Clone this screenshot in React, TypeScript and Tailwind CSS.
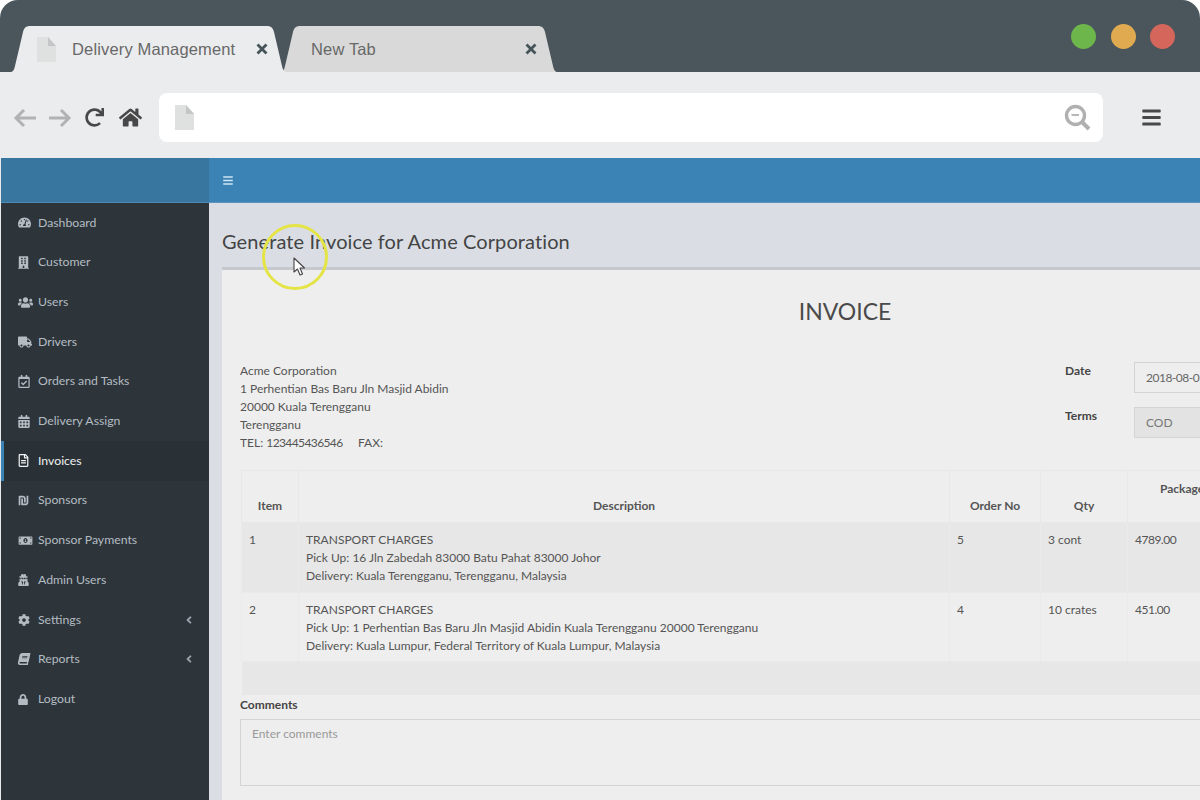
import React from "react";
import {
  FaTachometerAlt, FaBuilding, FaUsers, FaTruck, FaRegCalendarCheck, FaCalendarAlt, FaRegFileAlt,
  FaShekelSign, FaMoneyBillAlt, FaCog, FaBook, FaLock, FaHome, FaRedo, FaBars, FaAngleLeft, FaUserSecret,
} from "react-icons/fa";

const menu: { label: string; Icon: React.ComponentType<{ className?: string }>; icon: string; active?: boolean; chevron?: boolean }[] = [
  { label: "Dashboard", Icon: FaTachometerAlt, icon: "h-[13px] w-[13px]" },
  { label: "Customer", Icon: FaBuilding, icon: "h-[13px] w-[11px]" },
  { label: "Users", Icon: FaUsers, icon: "h-[13px] w-[15px]" },
  { label: "Drivers", Icon: FaTruck, icon: "h-[12px] w-[14px]" },
  { label: "Orders and Tasks", Icon: FaRegCalendarCheck, icon: "h-[13px] w-[12px]" },
  { label: "Delivery Assign", Icon: FaCalendarAlt, icon: "h-[13px] w-[12px]" },
  { label: "Invoices", Icon: FaRegFileAlt, icon: "h-[13px] w-[11px]", active: true },
  { label: "Sponsors", Icon: FaShekelSign, icon: "h-[11px] w-[11px]" },
  { label: "Sponsor Payments", Icon: FaMoneyBillAlt, icon: "h-[11px] w-[15px]" },
  { label: "Admin Users", Icon: FaUserSecret, icon: "h-[12px] w-[11px]" },
  { label: "Settings", Icon: FaCog, icon: "h-[12px] w-[12px]", chevron: true },
  { label: "Reports", Icon: FaBook, icon: "h-[12px] w-[12px] -skew-x-12", chevron: true },
  { label: "Logout", Icon: FaLock, icon: "h-[11px] w-[10px]" },
];

function Doc({ className }: { className: string }) {
  return (
    <svg viewBox="0 0 19 25" className={className}>
      <path d="M0 0H11L19 9V25H0Z" fill="#dfe0e0" />
      <path d="M11 0L19 9H11Z" fill="#c4c5c6" />
    </svg>
  );
}

function Close() {
  return (
    <svg viewBox="0 0 12 12" className="h-[12px] w-[12px] shrink-0">
      <path d="M1.5 1.5L10.5 10.5M10.5 1.5L1.5 10.5" stroke="#46545a" strokeWidth="2.8" />
    </svg>
  );
}

function Tab({ w, fill, children, className }: { w: number; fill: string; children: React.ReactNode; className: string }) {
  return (
    <div className={className}>
      <svg viewBox={`0 0 ${w} 46`} className="absolute inset-0 h-full w-full" preserveAspectRatio="none">
        <path d={`M0 46C3 46 4 44 5 40L13 6C14 2 16 0 20 0H${w - 20}C${w - 16} 0 ${w - 14} 2 ${w - 13} 6L${w - 5} 40C${w - 4} 44 ${w - 3} 46 ${w} 46Z`} fill={fill} />
      </svg>
      <div className="relative flex h-full items-center">{children}</div>
    </div>
  );
}

function Chrome() {
  return (
    <div className="h-[158px] shrink-0 font-['Liberation_Sans',sans-serif]">
      <div className="flex h-[72px] items-end justify-between rounded-t-[18px] bg-[#4a565b] pl-[10px] pr-[25px]">
        <div className="flex items-end">
          <Tab w={277} fill="#ebecee" className="relative z-10 h-[46px] w-[277px]">
            <Doc className="ml-[27px] h-[25px] w-[19px] shrink-0" />
            <span className="ml-[16px] w-[184px] shrink-0 text-[16.5px] tracking-[0.15px] text-[#686868]">Delivery Management</span>
            <Close />
          </Tab>
          <Tab w={278} fill="#d9d9d9" className="relative -ml-[7px] h-[46px] w-[278px]">
            <span className="ml-[31px] w-[214px] shrink-0 text-[16.5px] tracking-[0.15px] text-[#686868]">New Tab</span>
            <Close />
          </Tab>
        </div>
        <div className="mb-[23px] flex gap-[14px]">
          <span className="mr-[1px] h-[25px] w-[25px] rounded-full bg-[#6cb64c]" />
          <span className="h-[25px] w-[25px] rounded-full bg-[#e0aa50]" />
          <span className="h-[25px] w-[25px] rounded-full bg-[#d4665c]" />
        </div>
      </div>
      <div className="flex h-[86px] items-center bg-[#ebecee] pl-[13px] pr-[39px] pt-[5px]">
        <svg viewBox="0 0 24 20" className="h-[20px] w-[24px] shrink-0">
          <path d="M23 10H3M11 2L3 10L11 18" fill="none" stroke="#b2b2b2" strokeWidth="3" />
        </svg>
        <svg viewBox="0 0 24 20" className="ml-[11px] h-[20px] w-[24px] shrink-0">
          <path d="M1 10H21M13 2L21 10L13 18" fill="none" stroke="#b2b2b2" strokeWidth="3" />
        </svg>
        <FaRedo className="ml-[13px] h-[19px] w-[19px] shrink-0 text-[#484848]" />
        <FaHome className="ml-[15px] h-[21px] w-[23px] shrink-0 text-[#484848]" />
        <div className="ml-[17px] flex h-[49px] flex-1 items-center justify-between rounded-[8px] bg-white pl-[16px] pr-[12px]">
          <Doc className="h-[25px] w-[19px] shrink-0" />
          <svg viewBox="0 0 27 27" className="h-[27px] w-[27px]">
            <circle cx="11.5" cy="11.5" r="9" fill="none" stroke="#b0b0b0" strokeWidth="3.4" />
            <path d="M7.5 11H15" stroke="#b8b8b8" strokeWidth="2" />
            <path d="M18 18L25 25" stroke="#b0b0b0" strokeWidth="4" />
          </svg>
        </div>
        <FaBars className="ml-[39px] h-[21px] w-[19px] shrink-0 text-[#484848]" />
      </div>
    </div>
  );
}

function Sidebar() {
  return (
    <aside className="flex w-[209px] shrink-0 flex-col border-l border-[#e8eaec] bg-[#2d353b]">
      <div className="h-[45px] border-b border-[#4d8ab5] bg-[#38769f]" />
      <nav>
        {menu.map(({ label, Icon, icon, active, chevron }) => (
          <div
            key={label}
            className={
              active
                ? "flex h-[39.7px] items-center border-l-[3px] border-[#3c83b5] bg-[#2a3136] pl-[14px] pr-[16px] text-[#f0f2f3]"
                : "flex h-[39.7px] items-center border-l-[3px] border-transparent pl-[14px] pr-[16px] text-[#b4bcc2]"
            }
          >
            <span className="flex w-[20px] shrink-0 justify-start">
              <Icon className={icon} />
            </span>
            <span className="flex-1 text-[12.25px]">{label}</span>
            {chevron && <FaAngleLeft className="h-[12px] w-[8px] text-[#9aa2a8]" />}
          </div>
        ))}
      </nav>
    </aside>
  );
}

function Th({ children }: { children: React.ReactNode }) {
  return <th className="border border-[#e6e7e7] p-[7px] text-center align-bottom font-bold">{children}</th>;
}
function Td({ children }: { children?: React.ReactNode }) {
  return <td className="border border-[#e9eaea] px-[7px] pb-[6px] pt-[8px] align-top leading-[18px]">{children}</td>;
}

function Main() {
  return (
    <main className="relative min-w-0 flex-1 overflow-hidden bg-[#dadee4]">
      <div className="flex h-[45px] items-center border-b border-[#5a94bf] bg-[#3c83b5] pl-[13px]">
        <FaBars className="h-[11px] w-[12px] text-[#cfe6f3]" />
      </div>
      <h1 className="ml-[13px] mt-[25px] text-[20px] leading-[26px] tracking-[0.1px] text-[#444]">Generate Invoice for Acme Corporation</h1>
      <section className="ml-[13px] mt-[13px] h-[600px] w-[1246px] border-t-[3px] border-[#c5c9cd] bg-[#eeeeee] px-[18px] text-[12px] text-[#555]">
        <h2 className="pt-[23px] text-center text-[23px] leading-[36px] text-[#4a4a4a]">INVOICE</h2>
        <div className="mt-[33px] flex h-[108px] items-start">
          <div className="w-[825px] leading-[18px]">
            <p>Acme Corporation</p>
            <p>1 Perhentian Bas Baru Jln Masjid Abidin</p>
            <p>20000 Kuala Terengganu</p>
            <p>Terengganu</p>
            <p>TEL: <span className="tracking-[-0.6px]">123445436546</span> &nbsp;&nbsp;&nbsp; FAX:</p>
          </div>
          <div className="grid grid-cols-[69px_200px] gap-y-[14px]">
            <span className="font-bold leading-[18px] text-[#444]">Date</span>
            <div className="flex h-[31px] items-center border border-[#d2d4d5] bg-[#eeeeee] pl-[11px] tracking-[-0.5px] text-[#666]">2018-08-01</div>
            <span className="font-bold leading-[18px] text-[#444]">Terms</span>
            <div className="flex h-[31px] items-center border border-[#d2d4d5] bg-[#e3e3e3] pl-[11px] text-[#777]">COD</div>
          </div>
        </div>
        <table className="ml-[1px] w-[1210px] table-fixed border-collapse">
          <colgroup>
            <col className="w-[57px]" />
            <col className="w-[651px]" />
            <col className="w-[91px]" />
            <col className="w-[87px]" />
            <col className="w-[324px]" />
          </colgroup>
          <thead>
            <tr className="h-[52px]">
              <Th>Item</Th>
              <Th>Description</Th>
              <Th>Order No</Th>
              <Th>Qty</Th>
              <th className="border border-[#e6e7e7] p-[7px] pl-[32px] pt-[9px] text-left align-top font-bold">Package</th>
            </tr>
          </thead>
          <tbody>
            <tr className="h-[70px] bg-[#e7e7e7]">
              <Td>1</Td>
              <Td>TRANSPORT CHARGES<br />Pick Up: 16 Jln Zabedah 83000 Batu Pahat 83000 Johor<br />Delivery: Kuala Terengganu, Terengganu, Malaysia</Td>
              <Td>5</Td>
              <Td>3 cont</Td>
              <Td><span className="tracking-[-0.5px]">4789.00</span></Td>
            </tr>
            <tr className="h-[69px]">
              <Td>2</Td>
              <Td>TRANSPORT CHARGES<br />Pick Up: 1 Perhentian Bas Baru Jln Masjid Abidin Kuala Terengganu 20000 Terengganu<br />Delivery: Kuala Lumpur, Federal Territory of Kuala Lumpur, Malaysia</Td>
              <Td>4</Td>
              <Td>10 crates</Td>
              <Td><span className="tracking-[-0.5px]">451.00</span></Td>
            </tr>
            <tr className="h-[33px] bg-[#e7e7e7]">
              <td colSpan={5} />
            </tr>
          </tbody>
        </table>
        <p className="mt-[1px] font-bold leading-[18px] text-[#444]">Comments</p>
        <div className="mt-[5px] h-[67px] w-[1210px] border border-[#d2d4d5] px-[11px] pt-[5px] text-[#999]">Enter comments</div>
      </section>
      <div className="absolute left-[53px] top-[66px] h-[66px] w-[66px] rounded-full border-[3px] border-[#e4e446]" />
      <svg viewBox="0 0 12 19" className="absolute left-[84px] top-[99px] h-[19px] w-[12px]">
        <path d="M1 1V15L4.5 12L7 18L9.5 17L7 11H11.5Z" fill="#fff" stroke="#444" strokeWidth="1.1" strokeLinejoin="round" />
      </svg>
    </main>
  );
}

export default function App() {
  return (
    <div className="flex h-[800px] w-[1200px] flex-col overflow-hidden bg-white font-['Lato',sans-serif]">
      <Chrome />
      <div className="flex min-h-0 flex-1">
        <Sidebar />
        <Main />
      </div>
    </div>
  );
}
